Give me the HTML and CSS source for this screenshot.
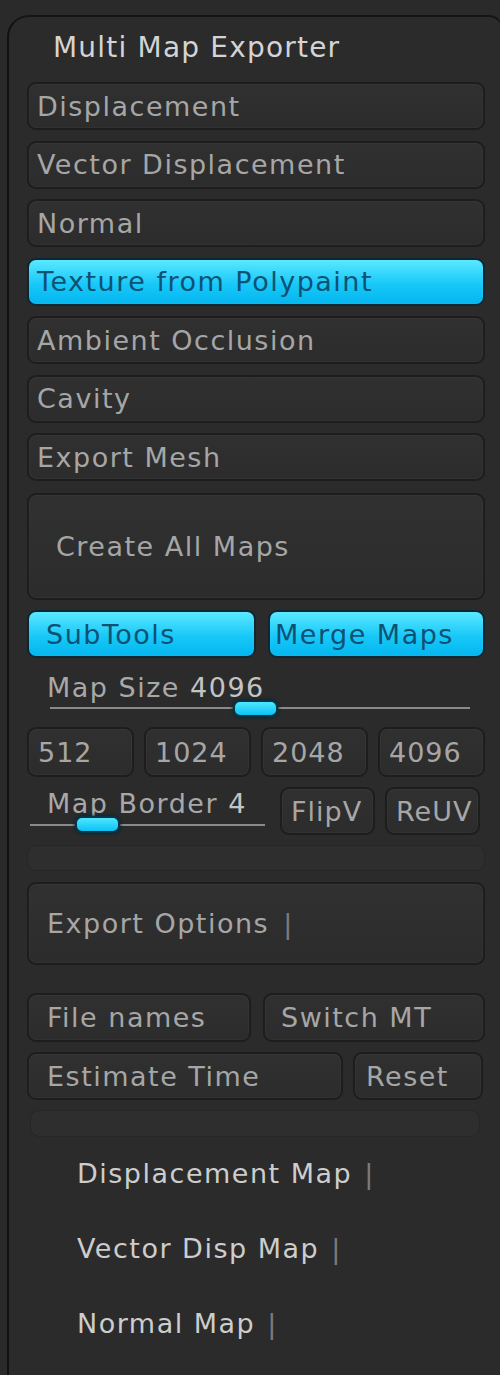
FILE: index.html
```html
<!DOCTYPE html>
<html>
<head>
<meta charset="utf-8">
<title>Multi Map Exporter</title>
<link rel="stylesheet" href="styles.css">
</head>
<body>
<div class="panel">
  <div class="title">Multi Map Exporter</div>

  <div class="stack">
    <div class="btn">Displacement</div>
    <div class="btn">Vector Displacement</div>
    <div class="btn">Normal</div>
    <div class="btn on">Texture from Polypaint</div>
    <div class="btn">Ambient Occlusion</div>
    <div class="btn">Cavity</div>
    <div class="btn">Export Mesh</div>
  </div>

  <div class="btn big create">Create All Maps</div>

  <div class="pair top-pair">
    <div class="btn on sub">SubTools</div>
    <div class="btn on merge">Merge Maps</div>
  </div>

  <div class="slider size-slider">
    <div class="slabel">Map Size <span class="val">4096</span></div>
    <div class="track"></div>
    <div class="knob" style="left: 206px;"></div>
  </div>

  <div class="sizes">
    <div class="btn">512</div>
    <div class="btn">1024</div>
    <div class="btn">2048</div>
    <div class="btn">4096</div>
  </div>

  <div class="border-row">
    <div class="slider border-slider">
      <div class="slabel">Map Border <span class="val">4</span></div>
      <div class="track"></div>
      <div class="knob" style="left: 48px;"></div>
    </div>
    <div class="btn small">FlipV</div>
    <div class="btn small">ReUV</div>
  </div>

  <div class="strip strip1"></div>

  <div class="btn big options"><span>Export Options</span><span class="bar">|</span></div>

  <div class="pair files-pair">
    <div class="btn fn">File names</div>
    <div class="btn sw">Switch MT</div>
  </div>

  <div class="est-row">
    <div class="btn est">Estimate Time</div>
    <div class="btn reset">Reset</div>
  </div>

  <div class="strip strip2"></div>

  <div class="sublabels">
    <div class="sublabel">Displacement Map <span class="bar">|</span></div>
    <div class="sublabel">Vector Disp Map <span class="bar">|</span></div>
    <div class="sublabel">Normal Map <span class="bar">|</span></div>
  </div>
</div>
</body>
</html>
```

FILE: styles.css
```css
html, body {
  margin: 0;
  padding: 0;
}
body {
  width: 500px;
  height: 1375px;
  overflow: hidden;
  background: #2a2a2a;
  font-family: "DejaVu Sans", "Verdana", sans-serif;
  font-size: 27px;
  letter-spacing: 1.5px;
  color: #a8a8a8;
}
.panel {
  margin-top: 15px;
  margin-left: 7px;
  width: 496px;
  height: 1400px;
  box-sizing: border-box;
  border-left: 2px solid #111111;
  border-top: 2px solid #151515;
  border-right: 2px solid #1a1a1a;
  border-top-left-radius: 22px;
  border-top-right-radius: 14px;
  padding: 0 16px 0 18px;
  background: #2b2b2b;
  display: flex;
  flex-direction: column;
}
.title {
  height: 58px;
  display: flex;
  align-items: center;
  padding-left: 26px;
  margin-top: 1px;
  color: #d4d4d4;
  font-size: 28px;
  letter-spacing: 1.2px;
}
.stack {
  margin-top: 6px;
  display: flex;
  flex-direction: column;
  gap: 10.5px;
}
.btn {
  height: 48px;
  box-sizing: border-box;
  border: 2px solid #1d1d1d;
  border-radius: 9px;
  background: linear-gradient(#303030, #2c2c2c);
  box-shadow: inset 0 0 0 1px rgba(255,255,255,0.03);
  color: #a6a6a6;
  display: flex;
  align-items: center;
  padding-left: 8px;
  white-space: nowrap;
  overflow: hidden;
}
.btn.on {
  background: linear-gradient(#5ae8ff, #18c8f8 55%, #04b6ef);
  border-color: #0c2734;
  color: #0d5274;
}
.btn.big {
  height: auto;
}
.create {
  margin-top: 12px;
  height: 107px !important;
  padding-left: 27px;
}
.pair {
  display: flex;
  gap: 12px;
}
.pair .btn {
  flex: 1;
}
.top-pair {
  margin-top: 10px;
}
.sub { padding-left: 17px; }
.merge { padding-left: 5px; }

.slider {
  position: relative;
}
.slabel {
  line-height: 30px;
  height: 30px;
  color: #a8a8a8;
  white-space: nowrap;
}
.slabel .val {
  color: #c4c4c4;
}
.track {
  height: 2px;
  background: #8a8a8a;
}
.knob {
  position: absolute;
  width: 45px;
  height: 17px;
  box-sizing: border-box;
  border-radius: 7px;
  background: linear-gradient(#4fe6ff, #0cc2f4);
  border: 2px solid #0b3344;
  box-shadow: 0 0 3px 1px rgba(0,40,60,0.8);
}
.size-slider {
  height: 69px;
}
.size-slider .slabel {
  margin-top: 15px;
  padding-left: 20px;
}
.size-slider .track {
  margin-top: 4px;
  margin-left: 23px;
  width: 420px;
}
.size-slider .knob {
  top: 42px;
}
.sizes {
  display: grid;
  grid-template-columns: repeat(4, 1fr);
  gap: 10px;
  height: 50px;
}
.sizes .btn {
  height: 50px;
  padding-left: 9px;
  letter-spacing: 1px;
}
.border-row {
  margin-top: 10px;
  height: 48px;
  display: flex;
  gap: 10px;
}
.border-slider {
  width: 243px;
}
.border-slider .slabel {
  margin-top: 2px;
  padding-left: 20px;
}
.border-slider .track {
  margin-top: 5px;
  margin-left: 3px;
  width: 235px;
}
.border-slider .knob {
  top: 29px;
}
.btn.small {
  width: 95px;
  padding-left: 9px;
  letter-spacing: 1px;
}
.strip {
  box-sizing: border-box;
  border: 1px solid #262626;
  border-radius: 9px;
  background: #2e2e2e;
}
.strip1 {
  margin-top: 10px;
  height: 26px;
}
.options {
  margin-top: 11px;
  height: 83px !important;
  padding-left: 18px;
}
.bar {
  color: #7c7c7c;
  margin-left: 2px;
}
.options .bar {
  margin-left: 14px;
}
.files-pair {
  margin-top: 28px;
}
.files-pair .btn {
  height: 49px;
}
.fn { padding-left: 18px; }
.sw { padding-left: 16px; }
.est-row {
  margin-top: 10px;
  display: flex;
  gap: 10px;
}
.est {
  width: 316px;
  padding-left: 18px;
}
.reset {
  width: 130px;
  padding-left: 11px;
}
.strip2 {
  margin-top: 10px;
  height: 27px;
  margin-left: 3px;
  margin-right: 5px;
}
.sublabels {
  margin-top: 22px;
  display: flex;
  flex-direction: column;
  gap: 45px;
  padding-left: 50px;
}
.sublabel {
  height: 30px;
  line-height: 30px;
  color: #cdcdcd;
  white-space: nowrap;
}
```
